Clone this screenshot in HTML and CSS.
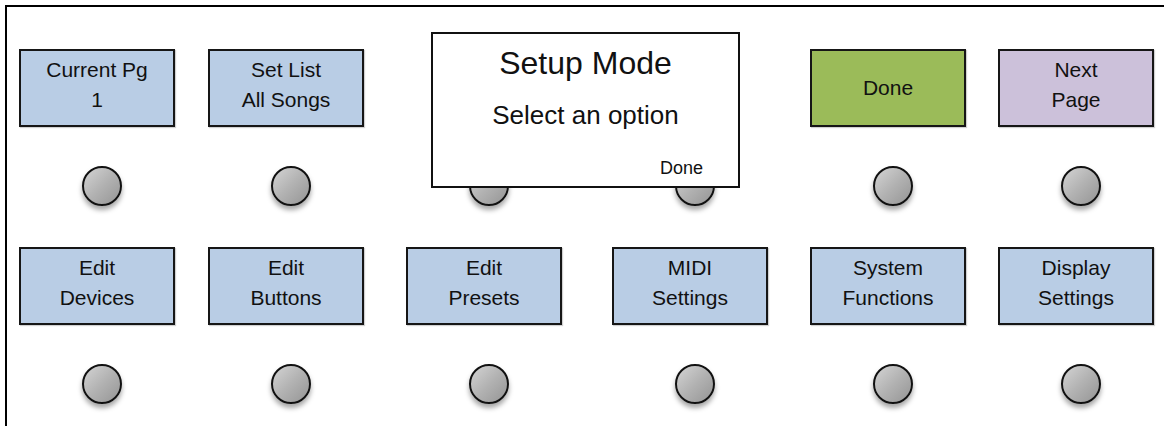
FILE: index.html
```html
<!DOCTYPE html>
<html>
<head>
<meta charset="utf-8">
<title>Setup Mode</title>
<link rel="stylesheet" href="styles.css">
</head>
<body>
<div class="panel">
  <div class="row">
    <div class="slot"><div class="box blue"><span>Current Pg</span><span>1</span></div><div class="knob"></div></div>
    <div class="slot"><div class="box blue"><span>Set List</span><span>All Songs</span></div><div class="knob"></div></div>
    <div class="slot"><div class="box empty"></div><div class="knob"></div></div>
    <div class="slot"><div class="box empty"></div><div class="knob"></div></div>
    <div class="slot"><div class="box green single"><span>Done</span></div><div class="knob"></div></div>
    <div class="slot"><div class="box purple"><span>Next</span><span>Page</span></div><div class="knob"></div></div>
  </div>
  <div class="row row2">
    <div class="slot"><div class="box blue"><span>Edit</span><span>Devices</span></div><div class="knob"></div></div>
    <div class="slot"><div class="box blue"><span>Edit</span><span>Buttons</span></div><div class="knob"></div></div>
    <div class="slot"><div class="box blue"><span>Edit</span><span>Presets</span></div><div class="knob"></div></div>
    <div class="slot"><div class="box blue"><span>MIDI</span><span>Settings</span></div><div class="knob"></div></div>
    <div class="slot"><div class="box blue"><span>System</span><span>Functions</span></div><div class="knob"></div></div>
    <div class="slot"><div class="box blue"><span>Display</span><span>Settings</span></div><div class="knob"></div></div>
  </div>
  <div class="modal">
    <div class="modal-title">Setup Mode</div>
    <div class="modal-sub">Select an option</div>
    <div class="modal-done">Done</div>
  </div>
</div>
</body>
</html>
```

FILE: styles.css
```css
html, body {
  margin: 0;
  padding: 0;
  background: #ffffff;
  overflow: hidden;
}
body {
  width: 1164px;
  height: 426px;
  font-family: "Liberation Sans", Arial, sans-serif;
  color: #111111;
}
.panel {
  position: relative;
  margin: 5px 0 0 5px;
  width: 1200px;
  height: 421px;
  border-top: 2px solid #000000;
  border-left: 2px solid #000000;
  padding: 42px 0 0 12px;
  box-sizing: border-box;
}
.row {
  display: grid;
  grid-template-columns: 189px 198px 206px 198px 188px 156px;
}
.row2 {
  margin-top: 41px;
}
.slot {
  display: flex;
  flex-direction: column;
}
.box {
  width: 156px;
  height: 78px;
  box-sizing: border-box;
  border: 2px solid #161616;
  box-shadow: 1px 1px 1px rgba(0, 0, 0, 0.18);
  display: flex;
  flex-direction: column;
  align-items: center;
  padding-top: 4px;
  font-size: 21px;
  line-height: 30px;
}
.box.single {
  justify-content: center;
  padding-top: 0;
}
.box.empty {
  border-color: transparent;
  box-shadow: none;
}
.blue { background: #b9cde5; }
.green { background: #9bbb59; }
.purple { background: #ccc1da; }
.knob {
  width: 40px;
  height: 40px;
  box-sizing: border-box;
  margin: 39px 0 0 63px;
  border: 2px solid #111111;
  border-radius: 50%;
  background: linear-gradient(135deg, #d4d4d4 0%, #b2b2b2 50%, #959595 100%);
  box-shadow: 0 4px 5px rgba(0, 0, 0, 0.35);
}
.modal {
  position: absolute;
  left: 424px;
  top: 25px;
  width: 309px;
  height: 156px;
  box-sizing: border-box;
  border: 2px solid #111111;
  background: #ffffff;
  z-index: 2;
  display: flex;
  flex-direction: column;
  align-items: center;
  padding: 11px 35px 8px 35px;
}
.modal-title {
  font-size: 32px;
  line-height: 36px;
}
.modal-sub {
  margin-top: 19px;
  font-size: 26px;
  line-height: 30px;
}
.modal-done {
  margin-top: auto;
  align-self: flex-end;
  font-size: 18px;
  line-height: 20px;
}
```
